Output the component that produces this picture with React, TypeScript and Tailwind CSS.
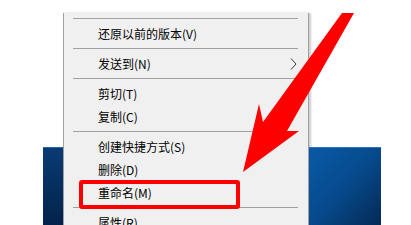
import React from "react";

type Entry = { label?: string; sub?: boolean; sep?: boolean };

const entries: Entry[] = [
  { sep: true },
  { label: "还原以前的版本(V)" },
  { sep: true },
  { label: "发送到(N)", sub: true },
  { sep: true },
  { label: "剪切(T)" },
  { label: "复制(C)" },
  { sep: true },
  { label: "创建快捷方式(S)" },
  { label: "删除(D)" },
  { label: "重命名(M)" },
  { sep: true },
  { label: "属性(R)" },
];

function Desktop({ width }: { width: string }) {
  return (
    <div className={`${width} shrink-0 flex flex-col`}>
      <div className="h-[147px] shrink-0" />
      <div className="flex-1 border-t border-[#2f74bb] bg-linear-to-br from-[#0a5aa8] via-[#064a8c] to-[#042a55]" />
    </div>
  );
}

export default function App() {
  return (
    <div className="relative w-[411px] h-[225px] overflow-hidden bg-white flex font-['Noto_Sans_CJK_SC',sans-serif] text-[12px] text-black">
      <div className="w-[43px] shrink-0" />
      <div className="w-[20px] shrink-0 flex flex-col">
        <div className="h-[147px] shrink-0" />
        <div className="flex-1 border-t border-[#2a64a0] bg-linear-to-b from-[#073c74] to-[#03234a]" />
      </div>

      <div className="w-[246px] shrink-0 mt-[13px] pt-[2px] h-[240px] bg-[#f0f0f0] border-l border-r border-[#a0a0a0] shadow-[2px_0_2px_rgba(0,0,0,0.2)]">
        {entries.map((e, i) =>
          e.sep ? (
            <div key={i} className="h-[7px] flex items-center ml-[9px] mr-[10px]">
              <div className="h-px w-full bg-[#a0a0a0]" />
            </div>
          ) : (
            <div key={i} className="h-[23px] flex items-center justify-between pl-[34px] pr-[11px] leading-none">
              <span>{e.label}</span>
              {e.sub && (
                <svg width="7" height="12" viewBox="0 0 7 12">
                  <polyline points="1,0.5 6,6 1,11.5" fill="none" stroke="#3a3a3a" strokeWidth="1" />
                </svg>
              )}
            </div>
          )
        )}
      </div>

      <Desktop width="w-[72px]" />

      {/* annotation: red box + arrow */}
      <div className="absolute left-[79px] top-[180px] w-[161px] h-[29px] border-4 border-[#ff0000] rounded-[3px]" />
      <svg className="absolute inset-0 pointer-events-none" width="411" height="225" viewBox="0 0 411 225">
        <polygon
          points="342,13 354,13 287,131 299,131 243,172 259,104 263,122"
          fill="#ff0000"
        />
      </svg>
    </div>
  );
}
